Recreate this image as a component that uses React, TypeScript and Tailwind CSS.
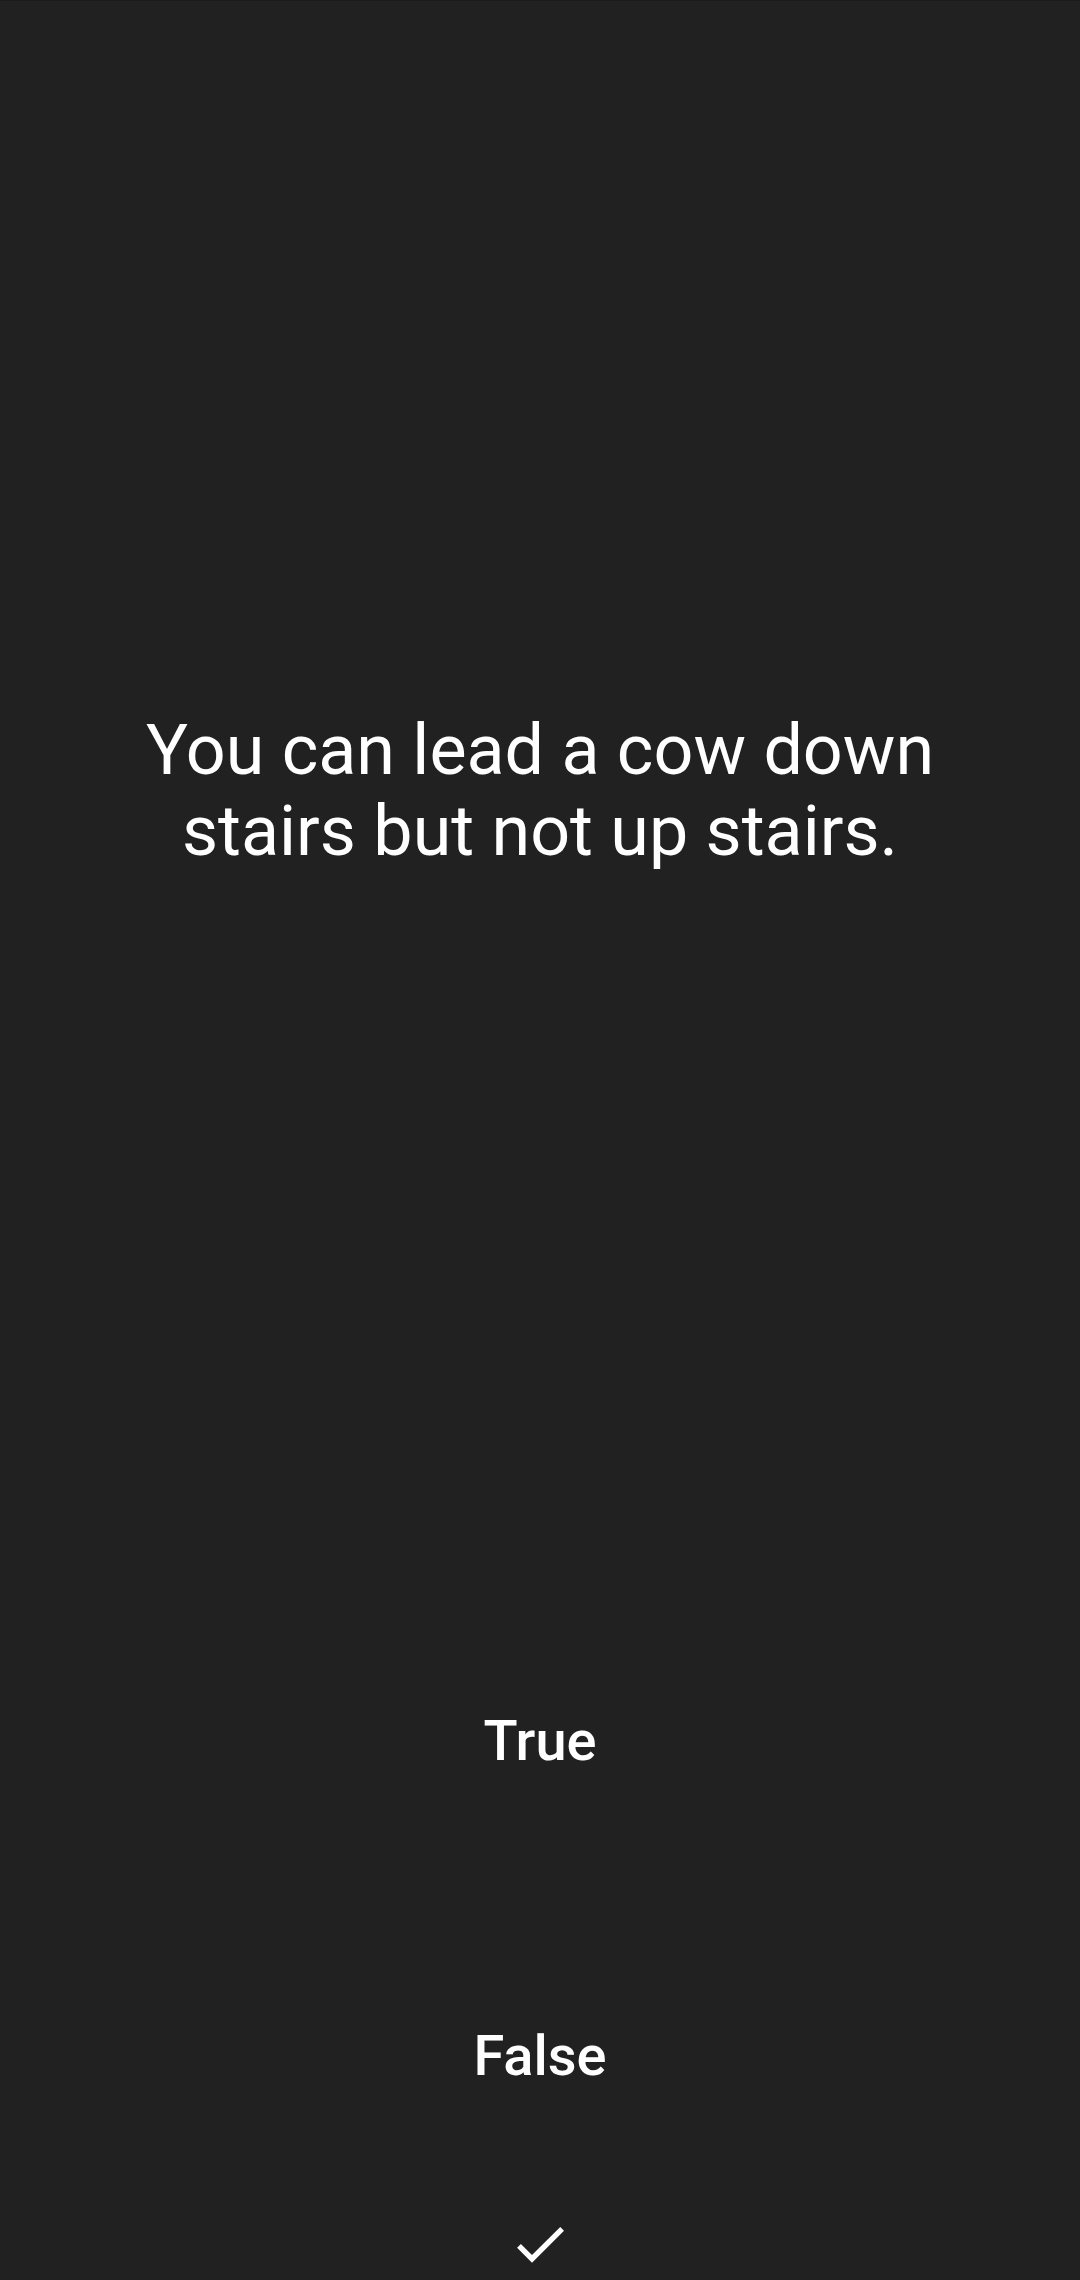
import React from "react";

export default function App() {
  return (
    <div
      className="w-[1080px] h-[2280px] bg-[#212121] border-t border-[#1a1a1a] flex flex-col items-center overflow-hidden text-white"
      style={{ fontFamily: "Roboto, 'Noto Sans', sans-serif" }}
    >
      <div className="mt-[709px] w-full px-[100px] text-center text-[70px] leading-[81px] font-normal">
        You can lead a cow down
        <br />
        stairs but not up stairs.
      </div>
      <button className="mt-[837px] w-full h-[64px] text-[56px] leading-[64px] font-medium text-white">
        True
      </button>
      <button className="mt-[251px] w-full h-[64px] text-[56px] leading-[64px] font-medium text-white">
        False
      </button>
      <div className="mt-[124px] w-[64px] h-[64px]">
        <svg viewBox="0 0 24 24" width="64" height="64" fill="#ffffff">
          <path d="M9 16.17L4.83 12l-1.42 1.41L9 19 21 7l-1.41-1.41z" />
        </svg>
      </div>
    </div>
  );
}
